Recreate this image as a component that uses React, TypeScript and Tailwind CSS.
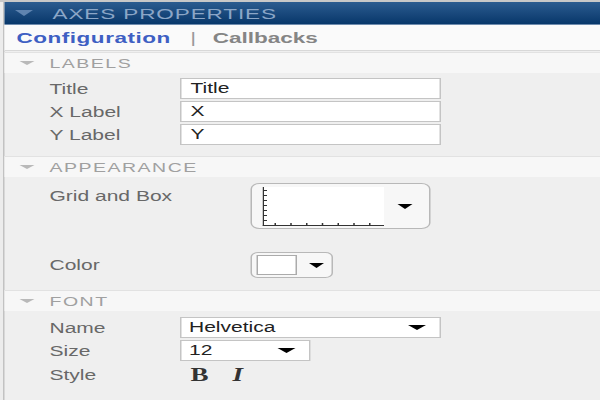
import React from 'react'

// panel is laid out at 400px wide and stretched to 600 like the reference
const Caret = ({ className = '' }: { className?: string }) => (
  <span className={`inline-block w-0 h-0 border-x-[5px] border-t-[5px] border-x-transparent border-t-black ${className}`} />
)

const SectionHeader = ({ title }: { title: string }) => (
  <div className="h-[21px] flex items-center border-t border-[#e2e2e2] bg-[#f7f7f7]">
    <span className="ml-[10px] w-0 h-0 border-x-[5px] border-t-[4px] border-x-transparent border-t-[#b9b9b9]" />
    <span className="ml-[10px] text-[13px] tracking-[1px] text-[#a0a0a0] leading-none">{title}</span>
  </div>
)

const Row = ({ label, children }: { label: string; children: React.ReactNode }) => (
  <div className="flex items-center">
    <div className="w-[117px] pl-[30px] text-[14px] text-[#686868] leading-none">{label}</div>
    {children}
  </div>
)

const TextInput = ({ value }: { value: string }) => (
  <div className="w-[174px] h-[21px] border border-[#c4c4c4] bg-white flex items-center pl-[6px] text-[14px] text-[#222]">
    {value}
  </div>
)

const GridBox = () => (
  <div className="w-[120px] h-[46px] rounded-[6px] border border-[#b8b8b8] bg-[#f7f7f7] flex items-center pl-[7px] pr-[11px] justify-between">
    <div className="w-[81px] h-[39px] bg-white">
      <svg width="81" height="39" viewBox="0 0 81 39">
        <g stroke="#333" strokeWidth="1" fill="none">
          <line x1="0.5" y1="0" x2="0.5" y2="39" />
          <line x1="0" y1="38.5" x2="81" y2="38.5" />
          {[3, 8, 13, 18, 23, 28, 33].map(y => (
            <line key={y} x1="0.5" y1={y + 0.5} x2="3" y2={y + 0.5} />
          ))}
          {[8.5, 19, 29.5, 40, 50.5, 61, 71.5].map(x => (
            <line key={x} x1={x} y1="36" x2={x} y2="38.5" />
          ))}
        </g>
      </svg>
    </div>
    <Caret />
  </div>
)

const ColorBox = () => (
  <div className="w-[55px] h-[26px] rounded-[5px] border border-[#b8b8b8] bg-[#f7f7f7] flex items-center pl-[3px]">
    <div className="w-[27px] h-[20px] border border-[#ababab] bg-white" />
    <Caret className="ml-[8px]" />
  </div>
)

const Select = ({ value, width }: { value: string; width: string }) => (
  <div className={`${width} h-[21px] border border-[#c4c4c4] bg-white flex items-center justify-between pl-[5px] pr-[9px] text-[14px] text-[#222]`}>
    <span>{value}</span>
    <Caret className="border-x-[6px]" />
  </div>
)

export default function App() {
  return (
    <div className="w-[400px] h-[400px] overflow-hidden origin-top-left scale-x-150 bg-[#ececec] border-t-2 border-[#c8c8c8] pl-[2px] font-['Liberation_Sans',Arial,sans-serif]">
      <div className="h-full border-l border-[#c2c2c2] bg-[#efefef] flex flex-col">
        <div className="h-[23px] flex items-center bg-gradient-to-b from-[#2b5c90] to-[#07376a] border-b border-[#6e8bad]">
          <span className="ml-[7px] w-0 h-0 border-x-[6px] border-t-[6px] border-x-transparent border-t-[#5f84b0]" />
          <span className="ml-[13px] text-[15px] tracking-[0.6px] text-[#8ba6c7] leading-none">AXES PROPERTIES</span>
        </div>
        <div className="h-[26px] flex items-center bg-[#fafafa] border-b border-[#d8d8d8] text-[15px] font-bold leading-none">
          <span className="ml-[8px] tracking-[0.35px] text-[#3e5fc3]">Configuration</span>
          <span className="ml-[13px] font-normal text-[#9a9a9a]">|</span>
          <span className="ml-[11px] text-[#858585]">Callbacks</span>
        </div>

        <div className="mt-[1px]">
          <SectionHeader title="LABELS" />
          <div className="pt-[5px] pb-[11px] flex flex-col gap-[2px]">
            <Row label="Title"><TextInput value="Title" /></Row>
            <Row label="X Label"><TextInput value="X" /></Row>
            <Row label="Y Label"><TextInput value="Y" /></Row>
          </div>
        </div>

        <div>
          <SectionHeader title="APPEARANCE" />
          <div className="pt-[6px] pb-[12px] flex flex-col gap-[23px]">
            <div className="flex items-start">
              <div className="w-[117px] pl-[30px] pt-[6px] text-[14px] text-[#686868] leading-none">Grid and Box</div>
              <div className="ml-[47px]"><GridBox /></div>
            </div>
            <div className="flex items-center">
              <div className="w-[117px] pl-[30px] text-[14px] text-[#686868] leading-none">Color</div>
              <div className="ml-[47px]"><ColorBox /></div>
            </div>
          </div>
        </div>

        <div>
          <SectionHeader title="FONT" />
          <div className="pt-[6px] flex flex-col gap-[2px]">
            <Row label="Name"><Select value="Helvetica" width="w-[174px]" /></Row>
            <Row label="Size"><Select value="12" width="w-[87px]" /></Row>
            <Row label="Style">
              <div className="h-[24px] flex items-center pl-[7px] gap-[16px] font-['Liberation_Serif',serif] text-[18px] text-[#333]">
                <span className="font-bold">B</span>
                <span className="font-bold italic">I</span>
              </div>
            </Row>
          </div>
        </div>
      </div>
    </div>
  )
}
